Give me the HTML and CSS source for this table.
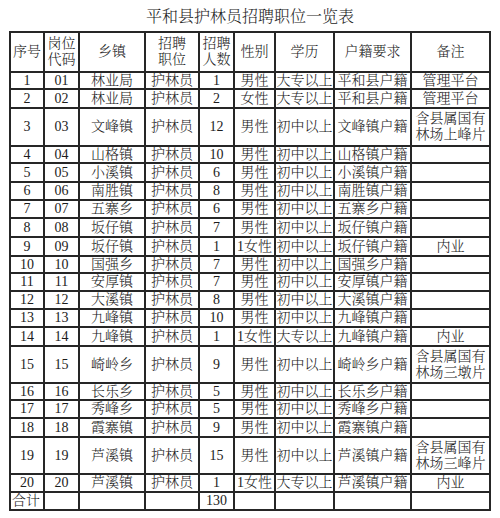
FILE: index.html
```
<!DOCTYPE html>
<html lang="zh-CN">
<head>
<meta charset="utf-8">
<title>平和县护林员招聘职位一览表</title>
<link rel="stylesheet" href="styles.css">
</head>
<body>
<h1 class="title">平和县护林员招聘职位一览表</h1>
<div class="sheet">
  <div class="cell">序号</div><div class="cell">岗位<br>代码</div><div class="cell">乡镇</div><div class="cell">招聘<br>职位</div><div class="cell">招聘<br>人数</div><div class="cell">性别</div><div class="cell">学历</div><div class="cell">户籍要求</div><div class="cell">备注</div>

  <div class="cell">1</div><div class="cell">01</div><div class="cell">林业局</div><div class="cell">护林员</div><div class="cell">1</div><div class="cell">男性</div><div class="cell">大专以上</div><div class="cell">平和县户籍</div><div class="cell">管理平台</div>
  <div class="cell">2</div><div class="cell">02</div><div class="cell">林业局</div><div class="cell">护林员</div><div class="cell">2</div><div class="cell">女性</div><div class="cell">大专以上</div><div class="cell">平和县户籍</div><div class="cell">管理平台</div>
  <div class="cell">3</div><div class="cell">03</div><div class="cell">文峰镇</div><div class="cell">护林员</div><div class="cell">12</div><div class="cell">男性</div><div class="cell">初中以上</div><div class="cell">文峰镇户籍</div><div class="cell">含县属国有<br>林场上峰片</div>
  <div class="cell">4</div><div class="cell">04</div><div class="cell">山格镇</div><div class="cell">护林员</div><div class="cell">10</div><div class="cell">男性</div><div class="cell">初中以上</div><div class="cell">山格镇户籍</div><div class="cell"></div>
  <div class="cell">5</div><div class="cell">05</div><div class="cell">小溪镇</div><div class="cell">护林员</div><div class="cell">6</div><div class="cell">男性</div><div class="cell">初中以上</div><div class="cell">小溪镇户籍</div><div class="cell"></div>
  <div class="cell">6</div><div class="cell">06</div><div class="cell">南胜镇</div><div class="cell">护林员</div><div class="cell">8</div><div class="cell">男性</div><div class="cell">初中以上</div><div class="cell">南胜镇户籍</div><div class="cell"></div>
  <div class="cell">7</div><div class="cell">07</div><div class="cell">五寨乡</div><div class="cell">护林员</div><div class="cell">6</div><div class="cell">男性</div><div class="cell">初中以上</div><div class="cell">五寨乡户籍</div><div class="cell"></div>
  <div class="cell">8</div><div class="cell">08</div><div class="cell">坂仔镇</div><div class="cell">护林员</div><div class="cell">7</div><div class="cell">男性</div><div class="cell">初中以上</div><div class="cell">坂仔镇户籍</div><div class="cell"></div>
  <div class="cell">9</div><div class="cell">09</div><div class="cell">坂仔镇</div><div class="cell">护林员</div><div class="cell">1</div><div class="cell">1女性</div><div class="cell">初中以上</div><div class="cell">坂仔镇户籍</div><div class="cell">内业</div>
  <div class="cell">10</div><div class="cell">10</div><div class="cell">国强乡</div><div class="cell">护林员</div><div class="cell">7</div><div class="cell">男性</div><div class="cell">初中以上</div><div class="cell">国强乡户籍</div><div class="cell"></div>
  <div class="cell">11</div><div class="cell">11</div><div class="cell">安厚镇</div><div class="cell">护林员</div><div class="cell">7</div><div class="cell">男性</div><div class="cell">初中以上</div><div class="cell">安厚镇户籍</div><div class="cell"></div>
  <div class="cell">12</div><div class="cell">12</div><div class="cell">大溪镇</div><div class="cell">护林员</div><div class="cell">8</div><div class="cell">男性</div><div class="cell">初中以上</div><div class="cell">大溪镇户籍</div><div class="cell"></div>
  <div class="cell">13</div><div class="cell">13</div><div class="cell">九峰镇</div><div class="cell">护林员</div><div class="cell">10</div><div class="cell">男性</div><div class="cell">初中以上</div><div class="cell">九峰镇户籍</div><div class="cell"></div>
  <div class="cell">14</div><div class="cell">14</div><div class="cell">九峰镇</div><div class="cell">护林员</div><div class="cell">1</div><div class="cell">1女性</div><div class="cell">大专以上</div><div class="cell">九峰镇户籍</div><div class="cell">内业</div>
  <div class="cell">15</div><div class="cell">15</div><div class="cell">崎岭乡</div><div class="cell">护林员</div><div class="cell">9</div><div class="cell">男性</div><div class="cell">初中以上</div><div class="cell">崎岭乡户籍</div><div class="cell">含县属国有<br>林场三墩片</div>
  <div class="cell">16</div><div class="cell">16</div><div class="cell">长乐乡</div><div class="cell">护林员</div><div class="cell">5</div><div class="cell">男性</div><div class="cell">初中以上</div><div class="cell">长乐乡户籍</div><div class="cell"></div>
  <div class="cell">17</div><div class="cell">17</div><div class="cell">秀峰乡</div><div class="cell">护林员</div><div class="cell">5</div><div class="cell">男性</div><div class="cell">初中以上</div><div class="cell">秀峰乡户籍</div><div class="cell"></div>
  <div class="cell">18</div><div class="cell">18</div><div class="cell">霞寨镇</div><div class="cell">护林员</div><div class="cell">9</div><div class="cell">男性</div><div class="cell">初中以上</div><div class="cell">霞寨镇户籍</div><div class="cell"></div>
  <div class="cell">19</div><div class="cell">19</div><div class="cell">芦溪镇</div><div class="cell">护林员</div><div class="cell">15</div><div class="cell">男性</div><div class="cell">初中以上</div><div class="cell">芦溪镇户籍</div><div class="cell">含县属国有<br>林场三峰片</div>
  <div class="cell">20</div><div class="cell">20</div><div class="cell">芦溪镇</div><div class="cell">护林员</div><div class="cell">1</div><div class="cell">1女性</div><div class="cell">大专以上</div><div class="cell">芦溪镇户籍</div><div class="cell">内业</div>
  <div class="cell cell-left">合计</div><div class="cell"></div><div class="cell"></div><div class="cell"></div><div class="cell">130</div><div class="cell"></div><div class="cell"></div><div class="cell"></div><div class="cell"></div>
</div>
</body>
</html>
```

FILE: styles.css
```
html, body {
  margin: 0;
  padding: 0;
  background: #fff;
}

body {
  font-family: "Liberation Serif", "Noto Serif CJK SC", "Noto Sans CJK SC", serif;
  font-weight: 300;
  color: #1c1c1c;
}

.title {
  margin: 0;
  padding-top: 9px;
  height: 22px;
  font-size: 16px;
  line-height: 16px;
  font-weight: 300;
  text-align: center;
}

.sheet {
  display: grid;
  width: max-content;
  margin-left: 9px;
  grid-template-columns: 32px 33px 64px 52px 33px 39px 57px 75px 77px;
  grid-template-rows: 38px 15px 17px 36px 15px 17px 16px 16px 17px 17px 15px 16px 16px 16px 17px 35px 15px 16px 17px 35px 16px 16px;
  gap: 2px;
  padding: 2px;
  background: #262626;
}

.cell {
  display: flex;
  align-items: center;
  justify-content: center;
  background: #fff;
  font-size: 14px;
  line-height: 16px;
  text-align: center;
  white-space: nowrap;
}

.cell-left {
  justify-content: flex-start;
  padding-left: 1px;
}
```
